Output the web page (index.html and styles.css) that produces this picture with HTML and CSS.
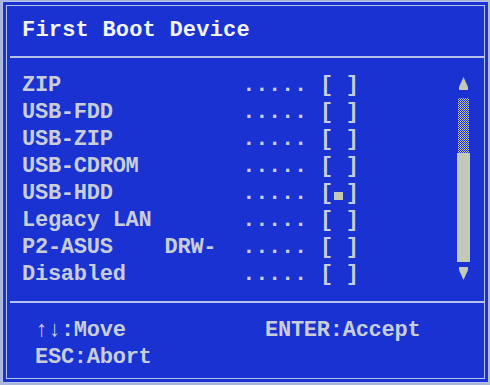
FILE: index.html
```html
<!DOCTYPE html>
<html lang="en">
<head>
    <meta charset="UTF-8">
    <meta name="viewport" content="width=device-width, initial-scale=1.0">
    <title>First Boot Device</title>
    <link rel="stylesheet" href="styles.css">
</head>
<body>
    <div class="screen">
        <div class="frame">
            <div class="header">
                <h1>First Boot Device</h1>
            </div>
            <div class="rule"></div>
            <div class="list">
                <div class="rows">
                    <div class="row">ZIP              ..... [ ]</div>
                    <div class="row">USB-FDD          ..... [ ]</div>
                    <div class="row">USB-ZIP          ..... [ ]</div>
                    <div class="row">USB-CDROM        ..... [ ]</div>
                    <div class="row">USB-HDD          ..... [<span class="mark"></span>]</div>
                    <div class="row">Legacy LAN       ..... [ ]</div>
                    <div class="row">P2-ASUS    DRW-  ..... [ ]</div>
                    <div class="row">Disabled         ..... [ ]</div>
                </div>
                <div class="scrollbar">
                    <svg class="arrow" width="13" height="13" viewBox="0 0 13 13">
                        <polygon points="6.5,0 11,10 2,10" fill="#c3c9b6"/>
                        <rect x="2" y="10" width="9" height="3" fill="#c3c9b6"/>
                    </svg>
                    <div class="track"></div>
                    <div class="thumb"></div>
                    <svg class="arrow down" width="13" height="13" viewBox="0 0 13 13">
                        <rect x="2" y="0" width="9" height="3" fill="#c3c9b6"/>
                        <polygon points="2,3 11,3 6.5,13" fill="#c3c9b6"/>
                    </svg>
                </div>
            </div>
            <div class="rule"></div>
            <div class="footer">
                <div class="keys">
                    <div>↑↓:Move</div>
                    <div>ESC:Abort</div>
                </div>
                <div class="keys">
                    <div>ENTER:Accept</div>
                </div>
            </div>
        </div>
    </div>
</body>
</html>
```

FILE: styles.css
```css
body {
    margin: 0;
    background-color: #a9b5d9;
    font-family: "Liberation Mono", "DejaVu Sans Mono", monospace;
    font-size: 22px;
    font-weight: bold;
    letter-spacing: -0.25px;
    line-height: 27px;
    color: #c8ced8;
}
.screen {
    width: 479px;
    height: 374px;
    margin: 1px 3px 2px 2px;
    padding: 3px;
    border: 1px solid #b6c2ea;
    background-color: #1a32d2;
}
.frame {
    height: 372px;
    border: 1px solid #b6c2ea;
    display: flex;
    flex-direction: column;
}
.header {
    height: 50px;
    padding: 11px 0 0 15px;
    box-sizing: border-box;
}
h1 {
    margin: 0;
    font-size: 22px;
    font-weight: bold;
    letter-spacing: 0.2px;
    color: #f2f4f8;
}
.rule {
    height: 2px;
    margin-left: 3px;
    background-color: #b6c2ea;
}
.list {
    display: flex;
    padding: 14px 0 13px 15px;
}
.row {
    white-space: pre;
}
.mark {
    display: inline-block;
    width: 13px;
    height: 27px;
    vertical-align: top;
    position: relative;
}
.mark::after {
    content: "";
    position: absolute;
    left: 1px;
    top: 12px;
    width: 9px;
    height: 8px;
    background-color: #c3c9b6;
}
.scrollbar {
    margin: 5px 14px 0 auto;
    width: 13px;
    display: flex;
    flex-direction: column;
}
.arrow {
    display: block;
}
.track {
    height: 55px;
    margin: 8px 1px 0;
    background: repeating-conic-gradient(#c3c9b6 0 25%, transparent 0 50%) 0 0 / 2px 2px;
}
.thumb {
    height: 109px;
    background-color: #c3c9b6;
}
.down {
    margin-top: 5px;
}
.footer {
    display: flex;
    padding: 14px 0 0 28px;
}
.keys {
    width: 230px;
    flex-shrink: 0;
}
```
